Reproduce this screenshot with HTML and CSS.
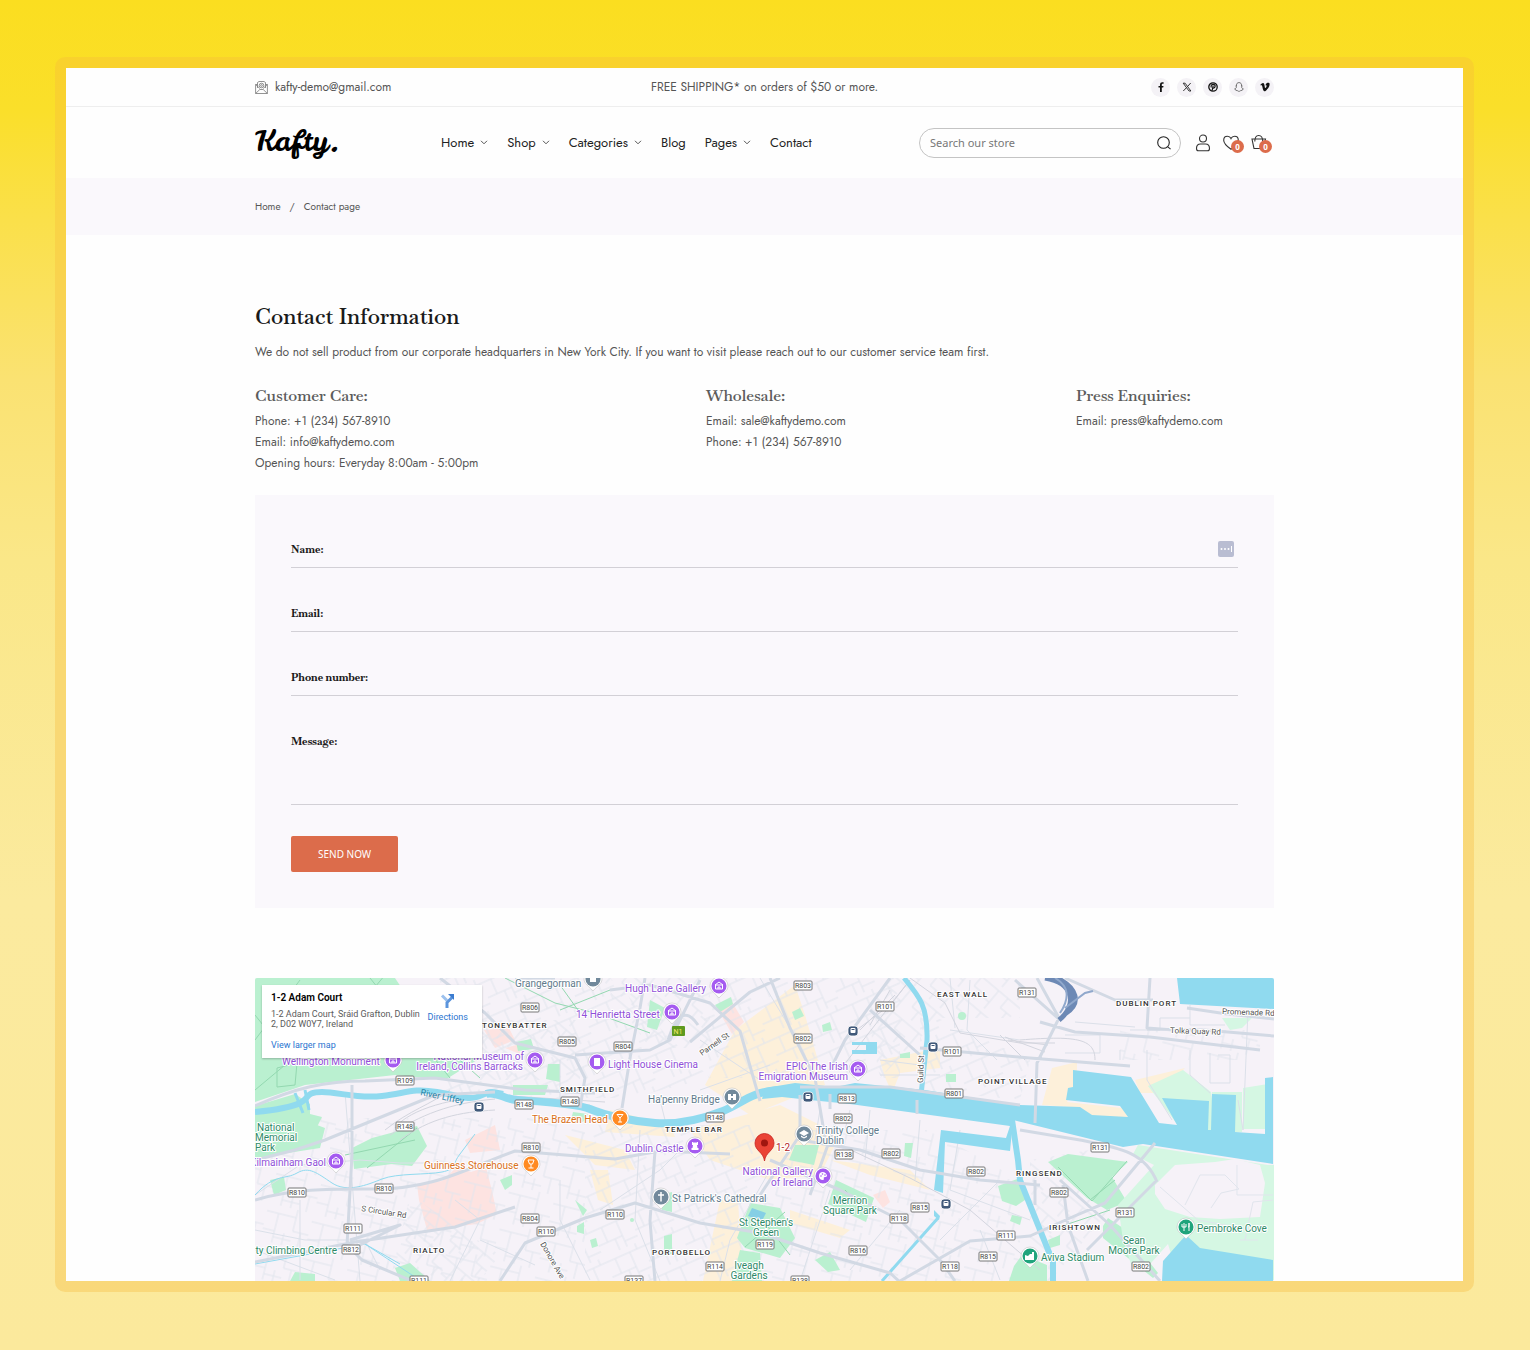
FILE: index.html
```html
<!DOCTYPE html>
<html lang="en">
<head>
<meta charset="utf-8">
<meta name="viewport" content="width=device-width, initial-scale=1">
<title>Contact page – Kafty</title>
<link rel="stylesheet" href="styles.css">
</head>
<body>
<div class="frame">
  <div class="topbar">
    <div class="container topbar-inner">
      <a class="mail" href="mailto:kafty-demo@gmail.com">
        <svg width="13" height="13" viewBox="0 0 13 13" fill="none" stroke="#777" stroke-width=".8" aria-hidden="true"><path d="M2.500 3.500H.6v9h11.800v-9h-1.900M2.500 7V1.500L4 .5h5l1.500 1V7M.6 3.500l4.200 4M12.400 3.500l-4.200 4M.6 12.500l4.200-4h3.400l4.200 4"/><circle cx="6.500" cy="4.500" r="2.300"/><circle cx="6.500" cy="4.500" r=".9"/></svg>
        <span>kafty-demo@gmail.com</span>
      </a>
      <p class="shipping">FREE SHIPPING* on orders of $50 or more.</p>
      <ul class="social">
        <li><a href="#" aria-label="Facebook"><svg width="10" height="10" viewBox="0 0 10 10"><path fill="#111" d="M4 10V5.600H2.500V3.900H4V2.700C4 1 4.900.2 6.300.2l1.300.1v1.500h-.9c-.7 0-.9.3-.9.900v1.200h1.700l-.3 1.700H5.800V10z"/></svg></a></li>
        <li><a href="#" aria-label="X"><svg width="10" height="10" viewBox="0 0 10 10" fill="none" stroke="#222"><path stroke-width=".9" d="M1.200 1.200h1.900l5.800 7.800H7zM8.700 1 5.500 4.600M4.500 5.600 1.300 9"/></svg></a></li>
        <li><a href="#" aria-label="Pinterest"><svg width="10" height="10" viewBox="0 0 10 10" fill="none" stroke="#111"><circle cx="5" cy="5" r="4.200" stroke-width="1.300"/><path stroke-width="1.200" d="M3.400 5.600C2.300 3.200 4 2.300 5.200 2.300c1.600 0 2.300 1.200 1.800 2.500-.5 1.500-1.700 1.500-2.200.8M5.200 3.700 4.100 8.700"/></svg></a></li>
        <li><a href="#" aria-label="Snapchat"><svg width="10" height="10" viewBox="0 0 10 10" fill="none" stroke="#444" stroke-width=".7"><path d="M5 .6C3.300.6 2.500 1.700 2.500 3v1l-.8-.1.8 1C2.200 6.200 1.500 6.700.6 7c.2.700 1 .6 1.400.8l.2.700c.8-.1 1.200 0 1.600.4.700.6 1.700.6 2.400 0 .4-.4.800-.5 1.600-.4l.2-.7c.4-.2 1.200-.1 1.400-.8-.9-.3-1.600-.8-1.900-2.100l.8-1-.8.1V3C7.500 1.700 6.700.6 5 .6z"/></svg></a></li>
        <li><a href="#" aria-label="Vimeo"><svg width="10" height="10" viewBox="0 0 10 10"><path fill="#111" d="M.3 2.800C1.300 1.900 2.200.9 3 .9c1.900-.1 1.500 4.600 2.300 5.200.5 0 1.400-1.600 1.300-2.300-.1-.6-.6-.6-1.200-.4C6.200 1 7.500.6 8.600.8c1 .2 1.200 1.200.9 2.400C9 5.400 6 9.300 4.500 9.300 2.900 9.300 2.600 5 2 3.500c-.2-.4-.6-.3-1.200.1z"/></svg></a></li>
      </ul>
    </div>
  </div>

  <header class="header">
    <div class="container header-inner">
      <a class="logo" href="#">Kafty.</a>
      <nav class="nav" aria-label="Main">
        <a href="#">Home <svg class="chev" viewBox="0 0 8 5"><path d="m1 .8 3 3 3-3"/></svg></a>
        <a href="#">Shop <svg class="chev" viewBox="0 0 8 5"><path d="m1 .8 3 3 3-3"/></svg></a>
        <a href="#">Categories <svg class="chev" viewBox="0 0 8 5"><path d="m1 .8 3 3 3-3"/></svg></a>
        <a href="#">Blog</a>
        <a href="#">Pages <svg class="chev" viewBox="0 0 8 5"><path d="m1 .8 3 3 3-3"/></svg></a>
        <a href="#">Contact</a>
      </nav>
      <div class="tools">
        <form class="search" role="search">
          <input type="search" placeholder="Search our store" aria-label="Search our store">
          <button type="submit" aria-label="Search"><svg width="14" height="14" viewBox="0 0 14 14" fill="none" stroke="#222" stroke-width="1.100"><circle cx="6.500" cy="6.500" r="5.800"/><path d="m10.800 10.800 2.800 2.400"/></svg></button>
        </form>
        <a class="tool" href="#" aria-label="Account"><svg width="16" height="18" viewBox="0 0 16 18" fill="none" stroke="#333" stroke-width="1.100"><circle cx="8" cy="4.500" r="3.500"/><path d="M1.500 14.500c0-3.300 1.500-4.500 4-4.500h5c2.500 0 4 1.200 4 4.500 0 1.500-.5 2.300-2 2.300h-9c-1.500 0-2-.8-2-2.300z"/></svg></a>
        <a class="tool" href="#" aria-label="Wishlist"><svg width="16" height="18" viewBox="0 0 16 18" fill="none" stroke="#333" stroke-width="1.100"><path d="M8 15.300C4.500 12.800.7 9.500.7 6.200.7 3.700 2.500 2.300 4.400 2.300 6.200 2.300 7.400 3.300 8 4.600c.6-1.300 1.800-2.300 3.600-2.300 1.900 0 3.700 1.400 3.700 3.900 0 3.300-3.800 6.600-7.300 9.100z"/></svg><span class="count">0</span></a>
        <a class="tool" href="#" aria-label="Cart"><svg width="16" height="18" viewBox="0 0 16 18" fill="none" stroke="#333" stroke-width="1.100"><path d="M1 5h13.500l-1.800 9.500H3zM3.800 7.500c0-3.300 1-6 3.900-6s4 2.700 4 6"/></svg><span class="count">0</span></a>
      </div>
    </div>
  </header>

  <nav class="crumbs" aria-label="Breadcrumb">
    <div class="container crumbs-inner"><a href="#">Home</a><span>/</span><span>Contact page</span></div>
  </nav>

  <main class="container main">
    <h1>Contact Information</h1>
    <p class="intro">We do not sell product from our corporate headquarters in New York City. If you want to visit please reach out to our customer service team first.</p>
    <div class="info">
      <section><h2>Customer Care:</h2><p>Phone: +1 (234) 567-8910</p><p>Email: info@kaftydemo.com</p><p>Opening hours: Everyday 8:00am - 5:00pm</p></section>
      <section><h2>Wholesale:</h2><p>Email: sale@kaftydemo.com</p><p>Phone: +1 (234) 567-8910</p></section>
      <section><h2>Press Enquiries:</h2><p>Email: press@kaftydemo.com</p></section>
    </div>

    <form class="contact">
      <div class="field"><label for="name">Name:</label><input id="name" type="text"><svg class="filler" viewBox="0 0 16 16" aria-hidden="true"><rect width="16" height="16" rx="2" fill="#b9bdd2"/><g fill="#fff"><circle cx="3.500" cy="8" r="1"/><circle cx="7" cy="8" r="1"/><circle cx="10.500" cy="8" r="1"/><path d="M13 5h1v6h-1z"/></g></svg></div>
      <div class="field"><label for="email">Email:</label><input id="email" type="email"></div>
      <div class="field"><label for="phone">Phone number:</label><input id="phone" type="tel"></div>
      <div class="field field-message"><label for="message">Message:</label><textarea id="message"></textarea></div>
      <button class="send" type="submit">SEND NOW</button>
    </form>

    <section class="map" aria-label="Map">
      <svg class="map-canvas" viewBox="255 978 1019 303" preserveAspectRatio="xMidYMid slice">
        <defs>
          <pattern id="grid-a" width="46" height="38" patternUnits="userSpaceOnUse" patternTransform="rotate(14)"><path class="lane" d="M0 8h30M12 8v30M30 0v22h16M0 26h12M22 26v12M38 22v16M12 32h18"/></pattern>
          <pattern id="grid-b" width="40" height="34" patternUnits="userSpaceOnUse" patternTransform="rotate(-24)"><path class="lane" d="M0 6h40M10 6v16M26 6v28M0 22h26M18 22v12M34 0v6M26 28h14"/></pattern>
          <pattern id="grid-c" width="34" height="28" patternUnits="userSpaceOnUse" patternTransform="rotate(40)"><path class="lane" d="M0 5h34M8 5v23M20 5v12M20 17h14M0 20h8M28 17v11"/></pattern>
          <g id="pin"><path d="M-9 0a9 9 0 1 1 18 0C9 5 4 7 0 12-4 7-9 5-9 0z" fill="#fff" stroke="#bbb" stroke-width=".5"/><circle r="7.500"/></g>
          <g id="museum" fill="none" stroke="#fff"><path d="m-4-1 4-3 4 3zM-3.500-1v4h7v-4M-1 3V1h2v2"/></g>
          <g id="station"><rect x="-5" y="-5" width="10" height="10" rx="3" fill="#40597a" stroke="#fff" stroke-width=".8"/><rect x="-2.500" y="-3" width="5" height="5" rx="1" fill="#fff"/><path d="M-1.500-1.500h3M-2 3.500l1-1M2 3.500l-1-1" stroke="#40597a"/></g>
        </defs>
        <rect x="255" y="978" width="1019" height="303" fill="#f6f2f8"/>
        <!-- city blocks -->
        <g class="shop">
          <path d="m735 1030 60-45 10 30 20 70-75 30-45-30zM690 1130l90-25 60 30-20 40-50 5-60-20zM610 1110l60 15 5 12-70-5zM565 1135l60 15 10 20-40-5zM720 1200h18l5 81h-40zM880 1060l60-12v20l-40 5-8 20-8-18zM590 1170l18 0 5 35-15-5zM790 1210l60 20-10 8-50-15zM830 1160l80 10 20 20-60-15zM1052 1068l25-6v15l-10 25 55 6 8 12-40-3-20-10-28-2zM1135 1080l50-12-25 25-20 0z"/>
        </g>
        <path class="health" d="m417 1184 25-3 15-14 14 5 15-5 6 24 5 23-20 10-50 6-8-30zM465 1140l30-15 5 25-30 3zM484 1030l25-2 6 12-20 8zM718 1010l14-8 12 20-12 12zM873 1195l12-5 5 12-7 6zM505 1048l15-4v10z"/>
        <!-- minor streets -->
        <path fill="url(#grid-a)" d="M255 1118h330v163H255zM800 1130h130l90 50v101H760v-80zM1120 1030h140v30h-140z"/>
        <path fill="url(#grid-b)" d="M440 978h170l100 100-80 20H440zM700 978h200v100H710zM585 1125h175v156H585zM920 1010l110 50-10 40-100-10z"/>
        <path fill="url(#grid-c)" d="M480 1020h100v60H480zM600 978h110v70h-60zM880 978h140v40h-80l-60 60-10-50zM1030 1160l60-10 20 60-60 71h-20zM410 1195l90 60-20 26h-90z"/>
        <!-- parks -->
        <g class="park">
          <path d="m255 978h140l10 15 75 65-35 22-50-5-90 10-50 17zM255 1106l40-12 15 10 0 10 12 3-15 30-52 14zM352 1148l20-10 45-12 10 20-15 20-20-2-38 5zM255 1125l30-12 40 15-5 20-65 10z"/>
          <path d="m270 1180 14-3 2 13-12 5zM395 1268l15-5 20 18h-30zM295 1272l20 2v7h-25zM500 1180l12-5v10l-7 5zM513 1085l35 0-3 10h-32zM516 1042l15-3 3 10-16 2zM548 1064l12 0v18l-14-3zM650 1000l15 8-8 22-10-3zM792 1012l8-4 4 8-9 4zM822 1025l8-3 2 8-9 2zM715 1005l16-8 2 7-13 8zM750 1203l30 5 15 30-15 20-35-10-8-10zM836 1180l38 18-8 24-38-18zM795 1145l24 0-5 20-25-5zM815 1260l15-8 10 18-12 2zM660 1195l12-3v20l-10-2zM664 1236l8-2v20l-8 2zM740 1250l20 3 2 28h-30zM905 1143l8 0-2 15-7-2zM998 1186l22-8 8 20-12 8-14-5zM1012 1215l10 2-2 8-10-4zM1048 1162l20-8 60 8-16 15 15 25-20 8-20-12zM1108 1218l15 10 35 45-5 5-50-40 0-12zM1022 1255l25 10 0 16h-38l5-15zM1048 1240l12-5 0 10-10 3zM900 1054l10-2v6l-10 0zM946 1074l10 0v8h-10zM573 1112l15 2-5 8-12-2zM575 1200l12 10-4 6zM577 1226l7-4v12l-7-2zM590 1240l6-2 2 8-6 2z"/>
          <circle cx="962" cy="1016" r="4"/><circle cx="632" cy="1220" r="2"/>
        </g>
        <g class="coast-green"><path d="m1133 1154 5-9 130 20h6v115l-60-4-40-12-6-20-25 28-10-2-10-30-5-35 36-40-30-15zM1183 1070l28 22 1 35-35-3-29-38zM1243 1088l25-4v45h-25zM1222 1018l30 0-10 10-12 2zM1212 1092h30v40h-35z"/></g>
        <path fill="#f6f2f8" d="m1155 1185 20-20 40-3 20-3 25 6 5 18-5 34-40 2-30-2-25-8-10-15z"/>
        <path class="lane" d="m1160 1187 38 33 65 12M1185 1205l15-30h25l14 14-18 4-10 15M1237 1165v30h36M1245 1240l8-38 20-2M1240 1240h18"/>
        <!-- park footpaths -->
        <path class="trail" d="m255 1015 40 50 40-30 50-60M255 1090l30-25M300 980l-45 60M480 1078l-90-80M370 978l80 100M277 1068l20-5-2 22-18 2zM417 1128l-50 40M345 1155l70-15M505 978l50 25 40 10 55 20M560 985l20 28M610 990l-50 20M755 1210l35 45M785 1212l-40 35M1058 1167l34 34 35-40M1090 1200l25-20M845 1190l20 20M1050 1230l60-20"/>
        <!-- secondary streets -->
        <g class="street">
          <path d="m255 1195 45-30 60-5 40 3 60 0M345 1092l15 189M255 1230l50 10 60 0 15 30M300 1200l0 80M255 1250l80 30M455 1200l25 20-30 61M480 1240l55 25M560 1180l0 40 30 60M640 1130l-5 90 25 61M680 1150l-20 20-60 40M770 1170l-40 70-10 41M830 1190l-30 91M900 1210l-50 60M920 1120l-5 60M960 1130l-10 60 80 30M1000 1180l-60 60M980 1230l20 50M1130 1030h30v-12h30M1075 1022l60 5M1065 1035h35v18h-35M1147 1050l0 30 25 40M1190 1050v25l20 18M1248 1010l-5 120-5-30M1218 1055h12v28h-20v-30M1120 1050v10M1225 1025h-35v-20M970 980l-3 50 30 30M950 978l5 50M1020 1040l-70-10M880 1060l40 5M880 1075h60M820 1110l-5 30M850 1110l-5 20M870 1110l-5 50M700 1040l60 40M660 1100l5 20M560 1060l0 40M530 1100l60 5M700 1090l70-25M760 978l30 50"/>
        </g>
        <g class="rail"><path d="M395 1128c15-20 60-30 100-33l110 7M390 1135c30-20 60-32 105-36M400 1140c30-22 60-28 95-30M385 1130c25-20 45-25 65-40M840 1070l70-90M850 1035l40-30 20-25M860 1030l35-35M870 1025l20-35M910 978l35 25 15 30 60 10 35 0M1000 1035l25 25M1005 1037l40 15M1008 1040l40 5M1020 1040c60-5 75 0 75 20M830 1140l80 38 60 32 70 60"/></g>
        <!-- water -->
        <g class="water-line">
          <path stroke-width="6" d="M255 1112c20-2 35-4 45-9s5-11 22-11 35 7 60 4 30-8 55-4 30 8 40 5 10-7 26-3"/>
          <path stroke-width="8" d="M486 1094c10-3 18 5 30 6s60 3 74 9 40 12 65 14 50-5 68-12 28-19 55-21"/>
          <path stroke-width="5" d="M904 978c15 18 24 28 23 62l-6 55"/>
          <path stroke-width="6" d="M1012 1120l6 40 2 20 20 50 13 32 0 19"/>
          <path stroke-width="3" d="M938 1218 882 1281M295 1093l8 20M305 1090l4 20"/>
          <path stroke-width="1" d="M255 1195c20-22 30-15 42-22s20 0 35 10 35 2 50-4 45-4 60-7 10-8 18-18l15-20M255 1264l110-20 50 33M365 1244l35 20"/>
        </g>
        <path class="water" d="m765 1088 30-5 40 4 20-4 70 7 95 15 60 2 12 8 36 2-8-11-54-6 2-12 5-1 0-17 58 7 28 46 18 2-15-27 47 3-1 29h3l1-36 24 1-1 37 30 2 0-56 8-1v87l-130-20-20 3-110-27-3 31-65-9-2 51-9-3 7-60 65 8 4-12-160-22-40-4-28-3-20 2zM1177 978h97v31l-94-5zM852 1042h25v12h-25v-4h14v-5h-14zM934 1210l6 6-1 4-5-4zM1162 1281l1-20 23-26 14 13 73 12v21z"/>
        <path fill="#85cfe5" d="m752 1208 14 5-4 8-14-5z"/>
        <!-- major roads -->
        <g class="road">
          <path d="M255 1106c40-18 70-25 110-25l70-3 90 12 70 3M255 1160l40-10 30-10 110-45 60-3M352 1085l0 70-5 90 15 15 50 21M255 1200c40-12 80-11 120-11 60 0 90-20 140-38l100 8 45-8 70 3M360 1245l40-20-50 15M255 1262l100-20 100-15 60-20M500 1281l25-38 60-25 50-15 65 20 60 10 60 20 70 20 20 18M655 1281l-5-60 5-70M555 978l-40 0M440 978l45 35 30 30 60 15 10 20-5 30M575 1055l75-5 20-10 30-60M645 978l-5 30-10 50-8 50M610 990l40-5 60 18 30 28 20 70M770 978l20 50 25 50 10 60M690 1042l60-50 30-14M668 1040c10-30 20-30 30-15M830 1070l15-30 45-62M800 1095l0 40-40 60M830 1094v15M917 1100v14M800 1087l90 0 130 18M770 1160l70 30 60 30 40 40 15 21M800 1140l60 10 60 20 60 10 60 5M835 1125l-25 70M900 1281l70-40 60-5 40-18 35-15 50-60M1020 1130l60 10c40 8 65 12 77 42M1157 1180l-70 70M1060 1180l50 45 50 56M1063 1185l5 40 20 56M1035 1180v25M1037 978l22 40-22 45-2 60M1060 1020l-45-40M1065 978l50 22h38M1150 978l-3 50 40 3M1187 1008l40 6 47 5M1147 1029l57 1 70 6M1040 1022l35 10 75 5 110 13M870 1010l50 45M920 1048l110 10 100 8"/>
        </g>
        <g fill="none" stroke="#6d89b5"><path stroke-width="5" d="M1045 978c30 5 32 28 14 42M1057 978c20 10 25 25 8 36"/><path stroke="#90a8cc" stroke-width="2" d="M1055 978c14 8 15 20 5 35M1065 1008l20-15 8-2"/></g>

        <!-- road numbers -->
        <g class="shield">
          <g><rect x="396" y="1076" width="18" height="9"/><text x="405" y="1083">R109</text></g>
          <g><rect x="396" y="1122" width="18" height="9"/><text x="405" y="1129">R148</text></g>
          <g><rect x="288" y="1188" width="18" height="9"/><text x="297" y="1195">R810</text></g>
          <g><rect x="375" y="1184" width="18" height="9"/><text x="384" y="1191">R810</text></g>
          <g><rect x="344" y="1224" width="18" height="9"/><text x="353" y="1231">R111</text></g>
          <g><rect x="342" y="1245" width="18" height="9"/><text x="351" y="1252">R812</text></g>
          <g><rect x="410" y="1276" width="18" height="9"/><text x="419" y="1283">R111</text></g>
          <g><rect x="521" y="1003" width="18" height="9"/><text x="530" y="1010">R806</text></g>
          <g><rect x="558" y="1037" width="18" height="9"/><text x="567" y="1044">R805</text></g>
          <g><rect x="614" y="1042" width="18" height="9"/><text x="623" y="1049">R804</text></g>
          <g><rect x="515" y="1100" width="18" height="9"/><text x="524" y="1107">R148</text></g>
          <g><rect x="561" y="1097" width="18" height="9"/><text x="570" y="1104">R148</text></g>
          <g><rect x="706" y="1113" width="18" height="9"/><text x="715" y="1120">R148</text></g>
          <g><rect x="522" y="1143" width="18" height="9"/><text x="531" y="1150">R810</text></g>
          <g><rect x="521" y="1214" width="18" height="9"/><text x="530" y="1221">R804</text></g>
          <g><rect x="537" y="1227" width="18" height="9"/><text x="546" y="1234">R110</text></g>
          <g><rect x="606" y="1210" width="18" height="9"/><text x="615" y="1217">R110</text></g>
          <g><rect x="706" y="1262" width="18" height="9"/><text x="715" y="1269">R114</text></g>
          <g><rect x="625" y="1276" width="18" height="9"/><text x="634" y="1283">R137</text></g>
          <g><rect x="756" y="1240" width="18" height="9"/><text x="765" y="1247">R119</text></g>
          <g><rect x="794" y="981" width="18" height="9"/><text x="803" y="988">R803</text></g>
          <g><rect x="876" y="1002" width="18" height="9"/><text x="885" y="1009">R101</text></g>
          <g><rect x="794" y="1034" width="18" height="9"/><text x="803" y="1041">R802</text></g>
          <g><rect x="943" y="1047" width="18" height="9"/><text x="952" y="1054">R101</text></g>
          <g><rect x="838" y="1094" width="18" height="9"/><text x="847" y="1101">R813</text></g>
          <g><rect x="834" y="1114" width="18" height="9"/><text x="843" y="1121">R802</text></g>
          <g><rect x="945" y="1089" width="18" height="9"/><text x="954" y="1096">R801</text></g>
          <g><rect x="1018" y="988" width="18" height="9"/><text x="1027" y="995">R131</text></g>
          <g><rect x="835" y="1150" width="18" height="9"/><text x="844" y="1157">R138</text></g>
          <g><rect x="882" y="1149" width="18" height="9"/><text x="891" y="1156">R802</text></g>
          <g><rect x="967" y="1167" width="18" height="9"/><text x="976" y="1174">R802</text></g>
          <g><rect x="911" y="1203" width="18" height="9"/><text x="920" y="1210">R815</text></g>
          <g><rect x="890" y="1214" width="18" height="9"/><text x="899" y="1221">R118</text></g>
          <g><rect x="849" y="1246" width="18" height="9"/><text x="858" y="1253">R816</text></g>
          <g><rect x="997" y="1231" width="18" height="9"/><text x="1006" y="1238">R111</text></g>
          <g><rect x="979" y="1252" width="18" height="9"/><text x="988" y="1259">R815</text></g>
          <g><rect x="941" y="1262" width="18" height="9"/><text x="950" y="1269">R118</text></g>
          <g><rect x="791" y="1276" width="18" height="9"/><text x="800" y="1283">R138</text></g>
          <g><rect x="1091" y="1143" width="18" height="9"/><text x="1100" y="1150">R131</text></g>
          <g><rect x="1116" y="1208" width="18" height="9"/><text x="1125" y="1215">R131</text></g>
          <g><rect x="1050" y="1188" width="18" height="9"/><text x="1059" y="1195">R802</text></g>
          <g><rect x="1132" y="1262" width="18" height="9"/><text x="1141" y="1269">R802</text></g>
        </g>
        <g class="shield-n"><rect x="672" y="1026" width="13" height="10" rx="1"/><text x="678" y="1034">N1</text></g>

        <!-- pins -->
        <g fill="#a55bf0">
          <g transform="translate(393 1060)"><use href="#pin"/><use href="#museum"/></g>
          <g transform="translate(535 1060)"><use href="#pin"/><use href="#museum"/></g>
          <g transform="translate(597 1062)"><use href="#pin"/><path fill="#fff" d="M-3-4h6v8h-6z"/></g>
          <g transform="translate(672 1012)"><use href="#pin"/><use href="#museum"/></g>
          <g transform="translate(719 986)"><use href="#pin"/><use href="#museum"/></g>
          <g transform="translate(858 1069)"><use href="#pin"/><use href="#museum"/></g>
          <g transform="translate(336 1161)"><use href="#pin"/><use href="#museum"/></g>
          <g transform="translate(695 1146)"><use href="#pin"/><path fill="#fff" d="M-3-4h1.500v1h1v-1h1v1h1v-1H3v3H2l.5 3h1v2h-7V2h1l.5-3h-1z"/></g>
          <g transform="translate(823 1176)"><use href="#pin"/><path fill="#fff" d="M0-4a4 4 0 1 0 0 8c1 0 1-1 .7-2 0-1 1-1 2-1S4 0 4-.500 2.500-4 0-4z"/><g fill="#a55bf0"><circle cx="-2" r=".8"/><circle cx="-.5" cy="-2" r=".8"/><circle cx="2" cy="-1" r=".8"/></g></g>
        </g>
        <g fill="#71899b">
          <g transform="translate(593 979)"><use href="#pin"/><path fill="#fff" d="M-3-1h6v4h-6z"/></g>
          <g transform="translate(732 1097)"><use href="#pin"/><path fill="#fff" d="M-4-3h3v2h2v-2h3v6H1V1h-2v2h-3z"/></g>
          <g transform="translate(804 1134)"><use href="#pin"/><path fill="#fff" d="m-5-1 5-3 5 3-5 3zM-3 1.500l3 1.800 3-1.800V3L0 4.500-3 3z"/></g>
          <g transform="translate(661 1197)"><use href="#pin"/><path fill="none" stroke="#fff" stroke-width="1.500" d="M0-5V4.500M-3-2h6"/></g>
        </g>
        <g fill="#ff8a22">
          <g transform="translate(620 1118)"><use href="#pin"/><path fill="none" stroke="#fff" d="m-3-3.500 3 3.500 3-3.500zM0 0v4M-2 4h4"/></g>
          <g transform="translate(531 1164)"><use href="#pin"/><path fill="none" stroke="#fff" d="M-3-4h6L1.500 0h-3zM0 0v4M-2.500 4h5"/></g>
        </g>
        <g fill="#20a47c">
          <g transform="translate(1186 1227)"><use href="#pin"/><path fill="none" stroke="#fff" d="M-2-4v8M-4-3v3h4v-3M3-4v8M3-4v4h-1"/></g>
          <g transform="translate(1030 1256)"><use href="#pin"/><path fill="#fff" d="M-5 4v-5l3 1 2-2 2 0 0-2 2 0v8z"/></g>
        </g>
        <use href="#station" x="479" y="1107"/><use href="#station" x="853" y="1031"/><use href="#station" x="933" y="1047"/><use href="#station" x="808" y="1097"/><use href="#station" x="946" y="1204"/>
        <path fill="#ea4335" stroke="#c5221f" stroke-width=".8" d="M764.500 1161c-1-9-9.500-10-9.500-18a9.500 9.500 0 0 1 19 0c0 8-8.500 9-9.500 18z"/><circle cx="764.500" cy="1143" r="3.500" fill="#a0160f"/>

        <!-- place names -->
        <g class="place violet">
          <text x="282" y="1065">Wellington Monument</text>
          <text x="524" y="1060" text-anchor="end">National Museum of</text>
          <text x="523" y="1070" text-anchor="end">Ireland, Collins Barracks</text>
          <text x="608" y="1068">Light House Cinema</text>
          <text x="576" y="1018">14 Henrietta Street</text>
          <text x="625" y="992">Hugh Lane Gallery</text>
          <text x="848" y="1070" text-anchor="end">EPIC The Irish</text>
          <text x="848" y="1080" text-anchor="end">Emigration Museum</text>
          <text x="326" y="1166" text-anchor="end">Kilmainham Gaol</text>
          <text x="625" y="1152">Dublin Castle</text>
          <text x="813" y="1175" text-anchor="end">National Gallery</text>
          <text x="813" y="1186" text-anchor="end">of Ireland</text>
        </g>
        <g class="place slate">
          <text x="515" y="987">Grangegorman</text>
          <text x="648" y="1103">Ha'penny Bridge</text>
          <text x="816" y="1134">Trinity College</text>
          <text x="816" y="1144">Dublin</text>
          <text x="672" y="1202">St Patrick's Cathedral</text>
        </g>
        <g class="place orange"><text x="532" y="1123">The Brazen Head</text><text x="424" y="1169">Guinness Storehouse</text></g>
        <g class="place green">
          <text x="257" y="1131">National</text><text x="255" y="1141">Memorial</text><text x="255" y="1151">Park</text>
          <text x="337" y="1254" text-anchor="end">ty Climbing Centre</text>
          <text x="766" y="1226" text-anchor="middle">St Stephen's</text><text x="766" y="1236" text-anchor="middle">Green</text>
          <text x="850" y="1204" text-anchor="middle">Merrion</text><text x="850" y="1214" text-anchor="middle">Square Park</text>
          <text x="749" y="1269" text-anchor="middle">Iveagh</text><text x="749" y="1279" text-anchor="middle">Gardens</text>
          <text x="1134" y="1244" text-anchor="middle">Sean</text><text x="1134" y="1254" text-anchor="middle">Moore Park</text>
          <text x="1041" y="1261">Aviva Stadium</text><text x="1197" y="1232">Pembroke Cove</text>
        </g>
        <g class="place red"><text x="776" y="1151">1-2</text></g>
        <g class="district">
          <text x="482" y="1028">TONEYBATTER</text><text x="560" y="1092">SMITHFIELD</text><text x="665" y="1132">TEMPLE BAR</text>
          <text x="937" y="997">EAST WALL</text><text x="978" y="1084">POINT VILLAGE</text><text x="1116" y="1006">DUBLIN PORT</text>
          <text x="1016" y="1176">RINGSEND</text><text x="1049" y="1230">IRISHTOWN</text><text x="652" y="1255">PORTOBELLO</text><text x="413" y="1253">RIALTO</text>
        </g>
        <g class="roadname">
          <text transform="translate(702 1056) rotate(-35)">Parnell St</text>
          <text transform="translate(923 1083) rotate(-88)">Guild St</text>
          <text transform="translate(361 1211) rotate(9)">S Circular Rd</text>
          <text transform="translate(540 1244) rotate(60)">Donore Ave</text>
          <text transform="translate(1170 1033) rotate(2)">Tolka Quay Rd</text>
          <text transform="translate(1222 1014) rotate(2)">Promenade Rd</text>
          <text class="river" transform="translate(420 1095) rotate(12)">River Liffey</text>
        </g>
      </svg>
      <div class="place-card">
        <div class="place-text">
          <h3>1-2 Adam Court</h3>
          <p>1-2 Adam Court, Sráid Grafton, Dublin 2, D02 W0Y7, Ireland</p>
          <a href="#">View larger map</a>
        </div>
        <a class="directions" href="#"><svg width="16" height="16" viewBox="0 0 16 16" fill="none" stroke="#5b94dc" stroke-width="3"><path stroke="#9cc1ee" d="m2 2.500 5 5"/><path d="M7 15V9.500l5-5"/><path fill="#3b7cd0" stroke="none" d="M8 1h6v6z"/></svg>Directions</a>
      </div>
    </section>
  </main>
</div>
</body>
</html>
```
FILE: styles.css
```css
* { box-sizing: border-box; }

body {
  margin: 0;
  padding: 57px 56px 58px 55px;
  background: linear-gradient(#fbde20 0, #fadf2a 110px, #fae04a 220px, #fae272 380px, #fae788 560px, #fbea9e 900px, #fbe99c 100%);
  color: #555;
  font: 12px/21px Jost, Lato, sans-serif;
}
h1, h2, h3, p, ul { margin: 0; padding: 0; }
a { color: inherit; text-decoration: none; }
input, textarea, button { font: inherit; color: inherit; border: 0; padding: 0; background: none; outline: 0; }
button { cursor: pointer; }

.frame {
  border: 11px solid rgba(246, 186, 60, .35);
  border-radius: 10px;
  background: #fefefe;
  background-clip: padding-box;
}
.container { max-width: 1019px; margin: 0 auto; }

/* top bar */
.topbar { border-bottom: 1px solid #eee; }
.topbar-inner { display: grid; grid-template-columns: 1fr auto 1fr; align-items: center; height: 38px; }
.mail { display: flex; align-items: center; gap: 7px; }
.social { display: flex; justify-content: flex-end; gap: 7px; list-style: none; }
.social a { display: grid; place-items: center; width: 19px; height: 19px; border-radius: 50%; background: #f4f2f6; }

/* header */
.header-inner { display: flex; align-items: center; height: 71px; }
.logo { width: 186px; padding-bottom: 4px; color: #000; font: 29px/40px "Leckerli One", "Kaushan Script", Lobster, Pacifico, "Dancing Script", "Liberation Serif", cursive; }
.nav { display: flex; gap: 19px; color: #222; font-size: 13px; }
.nav a { display: flex; align-items: center; gap: 6px; }
.chev { width: 8px; height: 5px; fill: none; stroke: #555; }
.tools { display: flex; align-items: center; gap: 12px; margin-left: auto; padding-right: 7px; }
.search { display: flex; align-items: center; width: 262px; height: 30px; margin-right: 2px; padding: 0 9px 0 10px; border: 1px solid #c4c4c4; border-radius: 15px; }
.search input { flex: 1; min-width: 0; font: 11px/20px "Noto Sans", sans-serif; }
.search input::placeholder { color: #777; opacity: 1; }
.search button { display: grid; }
.tool { position: relative; display: grid; width: 16px; }
.count { position: absolute; left: 8px; top: 6px; width: 13px; height: 13px; border-radius: 50%; background: #dc6c4b; color: #fff; font: bold 8px/13px "Noto Sans", sans-serif; text-align: center; }

/* breadcrumb */
.crumbs { background: #faf8fc; font-size: 10px; }
.crumbs-inner { display: flex; align-items: center; gap: 9px; height: 57px; }

/* contact details */
.main { padding-top: 70px; }
h1, h2, label { font-family: Baskervville, "Libre Caslon Text", "Liberation Serif", serif; font-weight: 600; }
h1 { color: #1a1a1a; font-size: 22px; line-height: 22px; }
.intro { margin-top: 15px; }
.info { display: grid; grid-template-columns: 451fr 370fr 198fr; margin: 23px 0 21px; }
h2 { margin-bottom: 5px; font-size: 16px; line-height: 20px; color: #5c5c5c; }

/* form */
.contact { display: flex; flex-direction: column; align-items: flex-start; gap: 27px; padding: 36px; background: #faf8fc; }
.field { display: flex; align-items: center; gap: 8px; width: 100%; height: 37px; border-bottom: 1px solid #d2d0d6; }
.field label { color: #1a1a1a; font-size: 11px; font-weight: 700; }
.field input, .field textarea { flex: 1; min-width: 0; height: 100%; resize: none; }
.field-message { height: 82px; align-items: flex-start; padding-top: 8px; }
.filler { width: 16px; height: 16px; margin-right: 4px; }
.send { height: 36px; margin-top: 4px; padding: 0 27px; border-radius: 2px; background: #dc6c4b; color: #fff; font: 10px/16px "Noto Sans", sans-serif; }

/* map */
.map { position: relative; margin-top: 70px; overflow: hidden; border-radius: 2px 2px 0 0; font-family: Roboto, sans-serif; }
.map-canvas { display: block; width: 100%; height: 303px; }
.lane { fill: none; stroke: #e1e5ed; }
.street { fill: none; stroke: #dbe0e9; stroke-width: 1; }
.rail { fill: none; stroke: #d3d5de; stroke-width: 1; }
.road { fill: none; stroke: #d2d9e4; stroke-width: 3; stroke-linejoin: round; }
.trail { fill: none; stroke: #93d8b0; }
.shop { fill: #fdf0da; }
.health { fill: #fde3e1; }
.park { fill: #baf0d0; }
.coast-green { fill: #d5f7e3; }
.water { fill: #90daef; }
.water-line { fill: none; stroke: #90daef; }
.shield rect { fill: #fff; stroke: #777; rx: 1px; }
.shield text { fill: #444; font-size: 7px; text-anchor: middle; }
.shield-n rect { fill: #5f9a1f; }
.shield-n text { fill: #f6e96a; font-size: 7px; text-anchor: middle; }
.place text, .district text, .roadname text { paint-order: stroke; stroke: #fff; stroke-width: 2px; stroke-linejoin: round; }
.place { font-size: 10px; }
.violet { fill: #9050d8; }
.slate { fill: #617a8c; }
.orange { fill: #d9701c; }
.green { fill: #2d8a68; }
.red { fill: #b3261e; }
.district { fill: #333; font-size: 8px; font-weight: 500; letter-spacing: 1px; }
.roadname { fill: #555; font-size: 8px; }
.roadname .river { fill: #2b83a5; stroke: none; font-size: 9px; }

.place-card { position: absolute; left: 7px; top: 7px; display: flex; justify-content: space-between; width: 220px; height: 73px; padding: 8px 14px 0 9px; background: #fff; box-shadow: 0 1px 2px rgba(0, 0, 0, .25); font-size: 9px; line-height: 10px; }
.place-text { width: 156px; }
.place-text h3 { margin-bottom: 6px; color: #000; font-size: 10px; line-height: 10px; font-weight: 600; }
.place-text p { margin-bottom: 11px; color: #5b5b5b; }
.place-card a { color: #2a74d0; }
.directions { display: flex; flex-direction: column; align-items: center; gap: 3px; }
```
